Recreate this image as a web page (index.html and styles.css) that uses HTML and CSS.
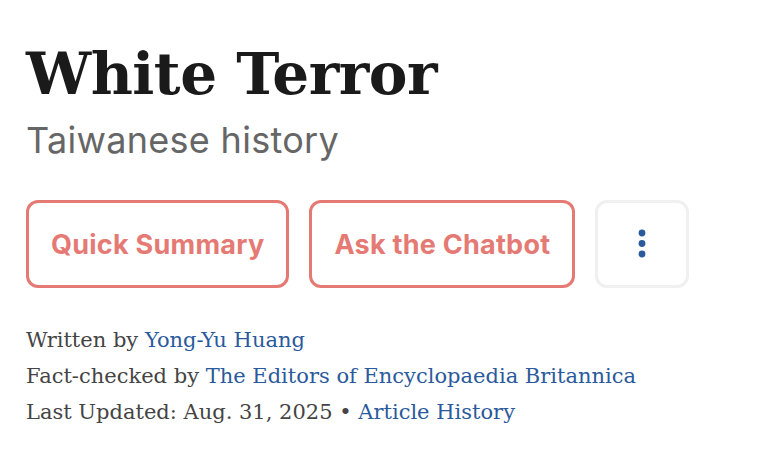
FILE: index.html
```html
<!DOCTYPE html>
<html lang="en">
<head>
<meta charset="utf-8">
<title>White Terror</title>
<link rel="stylesheet" href="styles.css">
</head>
<body>
<div class="page">
  <h1 class="title">White Terror</h1>
  <div class="subtitle">Taiwanese history</div>
  <div class="actions">
    <button class="btn btn-accent">Quick Summary</button>
    <button class="btn btn-accent">Ask the Chatbot</button>
    <button class="btn btn-more" aria-label="More">
      <svg width="8" height="30" viewBox="0 0 8 30"><circle cx="4" cy="4" r="3.4" fill="#2b5a9c"/><circle cx="4" cy="14.5" r="3.4" fill="#2b5a9c"/><circle cx="4" cy="25" r="3.4" fill="#2b5a9c"/></svg>
    </button>
  </div>
  <div class="meta">
    <div class="meta-line">Written by <a href="#">Yong-Yu Huang</a></div>
    <div class="meta-line">Fact-checked by <a href="#">The Editors of Encyclopaedia Britannica</a></div>
    <div class="meta-line">Last Updated: Aug. 31, 2025 &bull; <a href="#">Article History</a></div>
  </div>
</div>
</body>
</html>
```
FILE: styles.css
```css
html, body {
  margin: 0;
  padding: 0;
  background: #fff;
}
.page {
  padding: 34px 0 0 26px;
}
.title {
  margin: 0;
  font-family: "DejaVu Serif", "Liberation Serif", serif;
  font-weight: 700;
  font-size: 58px;
  line-height: 80px;
  color: #1a1a1a;
  letter-spacing: -0.5px;
}
.subtitle {
  margin-top: 4px;
  font-family: Inter, "Liberation Sans", Arial, sans-serif;
  font-size: 36px;
  line-height: 44px;
  letter-spacing: 0.3px;
  color: #666;
}
.actions {
  display: flex;
  gap: 20px;
  margin-top: 38px;
}
.btn {
  box-sizing: border-box;
  height: 88px;
  background: #fff;
  border-radius: 12px;
  font-family: Inter, "Liberation Sans", Arial, sans-serif;
  font-weight: 700;
  font-size: 27px;
  letter-spacing: 0.25px;
  padding: 0 22px;
  cursor: pointer;
}
.btn-accent {
  border: 3px solid #e57a74;
  color: #e57a74;
}
.btn-more {
  width: 94px;
  border: 3px solid #f0f0f0;
  display: flex;
  align-items: center;
  justify-content: center;
}
.meta {
  margin-top: 34px;
  font-family: "DejaVu Serif", "Liberation Serif", serif;
  font-size: 21px;
  line-height: 36px;
  color: #444;
}
.meta a {
  color: #2b5a9c;
  text-decoration: none;
}
```
